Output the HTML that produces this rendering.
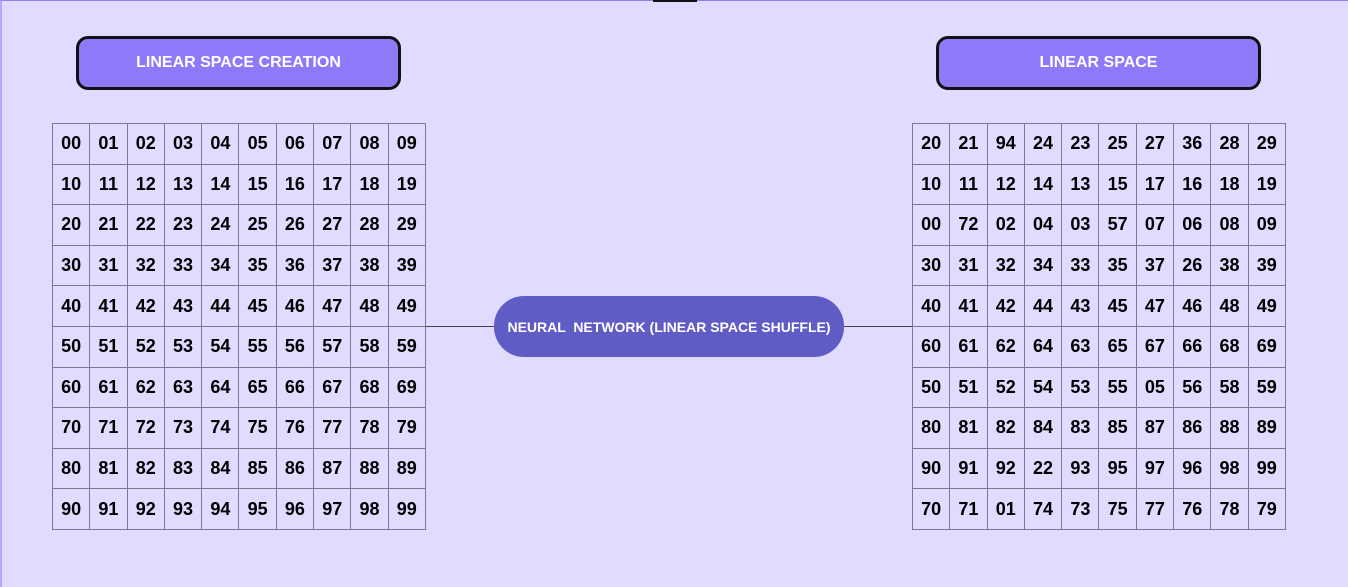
<!DOCTYPE html>
<html><head><meta charset="utf-8">
<style>
*{margin:0;padding:0;box-sizing:border-box}
body{width:1348px;height:587px;background:#e0dbff;position:relative;overflow:hidden;font-family:"Liberation Sans",sans-serif}
.frame{position:absolute;left:0;top:0;width:1348px;height:587px;border-top:1px solid #8f80f0;border-left:2px solid #b3a8ff}
.tab{position:absolute;left:653px;top:0;width:44px;height:2px;background:#111}
.btn{position:absolute;top:36px;width:325px;height:54px;background:#8e79f8;border:3px solid #111;border-radius:12px;color:#fff;font-weight:bold;font-size:16px;display:flex;align-items:center;justify-content:center}
.pill{position:absolute;left:494px;top:296px;width:350px;height:61px;background:#5f5cc6;border-radius:30px;color:#fff;font-weight:bold;font-size:14px;display:flex;align-items:center;justify-content:center;white-space:pre}
.line{position:absolute;top:326px;height:1px;background:#444}
.grid{position:absolute;top:123px;border-collapse:collapse}
.grid td{width:37.3px;height:40.6px;border:1px solid #7e788f;text-align:center;vertical-align:middle;font-weight:bold;font-size:18px;color:#000;padding:0}
</style></head><body>
<div class="frame"></div><div class="tab"></div>
<div class="btn" style="left:76px">LINEAR SPACE CREATION</div>
<div class="btn" style="left:936px">LINEAR SPACE</div>
<div class="line" style="left:425px;width:69px"></div>
<div class="line" style="left:844px;width:68px"></div>
<div class="pill">NEURAL  NETWORK (LINEAR SPACE SHUFFLE)</div>
<table class="grid" style="left:52px">
<tr><td>00</td><td>01</td><td>02</td><td>03</td><td>04</td><td>05</td><td>06</td><td>07</td><td>08</td><td>09</td></tr>
<tr><td>10</td><td>11</td><td>12</td><td>13</td><td>14</td><td>15</td><td>16</td><td>17</td><td>18</td><td>19</td></tr>
<tr><td>20</td><td>21</td><td>22</td><td>23</td><td>24</td><td>25</td><td>26</td><td>27</td><td>28</td><td>29</td></tr>
<tr><td>30</td><td>31</td><td>32</td><td>33</td><td>34</td><td>35</td><td>36</td><td>37</td><td>38</td><td>39</td></tr>
<tr><td>40</td><td>41</td><td>42</td><td>43</td><td>44</td><td>45</td><td>46</td><td>47</td><td>48</td><td>49</td></tr>
<tr><td>50</td><td>51</td><td>52</td><td>53</td><td>54</td><td>55</td><td>56</td><td>57</td><td>58</td><td>59</td></tr>
<tr><td>60</td><td>61</td><td>62</td><td>63</td><td>64</td><td>65</td><td>66</td><td>67</td><td>68</td><td>69</td></tr>
<tr><td>70</td><td>71</td><td>72</td><td>73</td><td>74</td><td>75</td><td>76</td><td>77</td><td>78</td><td>79</td></tr>
<tr><td>80</td><td>81</td><td>82</td><td>83</td><td>84</td><td>85</td><td>86</td><td>87</td><td>88</td><td>89</td></tr>
<tr><td>90</td><td>91</td><td>92</td><td>93</td><td>94</td><td>95</td><td>96</td><td>97</td><td>98</td><td>99</td></tr>
</table>
<table class="grid" style="left:912px">
<tr><td>20</td><td>21</td><td>94</td><td>24</td><td>23</td><td>25</td><td>27</td><td>36</td><td>28</td><td>29</td></tr>
<tr><td>10</td><td>11</td><td>12</td><td>14</td><td>13</td><td>15</td><td>17</td><td>16</td><td>18</td><td>19</td></tr>
<tr><td>00</td><td>72</td><td>02</td><td>04</td><td>03</td><td>57</td><td>07</td><td>06</td><td>08</td><td>09</td></tr>
<tr><td>30</td><td>31</td><td>32</td><td>34</td><td>33</td><td>35</td><td>37</td><td>26</td><td>38</td><td>39</td></tr>
<tr><td>40</td><td>41</td><td>42</td><td>44</td><td>43</td><td>45</td><td>47</td><td>46</td><td>48</td><td>49</td></tr>
<tr><td>60</td><td>61</td><td>62</td><td>64</td><td>63</td><td>65</td><td>67</td><td>66</td><td>68</td><td>69</td></tr>
<tr><td>50</td><td>51</td><td>52</td><td>54</td><td>53</td><td>55</td><td>05</td><td>56</td><td>58</td><td>59</td></tr>
<tr><td>80</td><td>81</td><td>82</td><td>84</td><td>83</td><td>85</td><td>87</td><td>86</td><td>88</td><td>89</td></tr>
<tr><td>90</td><td>91</td><td>92</td><td>22</td><td>93</td><td>95</td><td>97</td><td>96</td><td>98</td><td>99</td></tr>
<tr><td>70</td><td>71</td><td>01</td><td>74</td><td>73</td><td>75</td><td>77</td><td>76</td><td>78</td><td>79</td></tr>
</table>
</body></html>
